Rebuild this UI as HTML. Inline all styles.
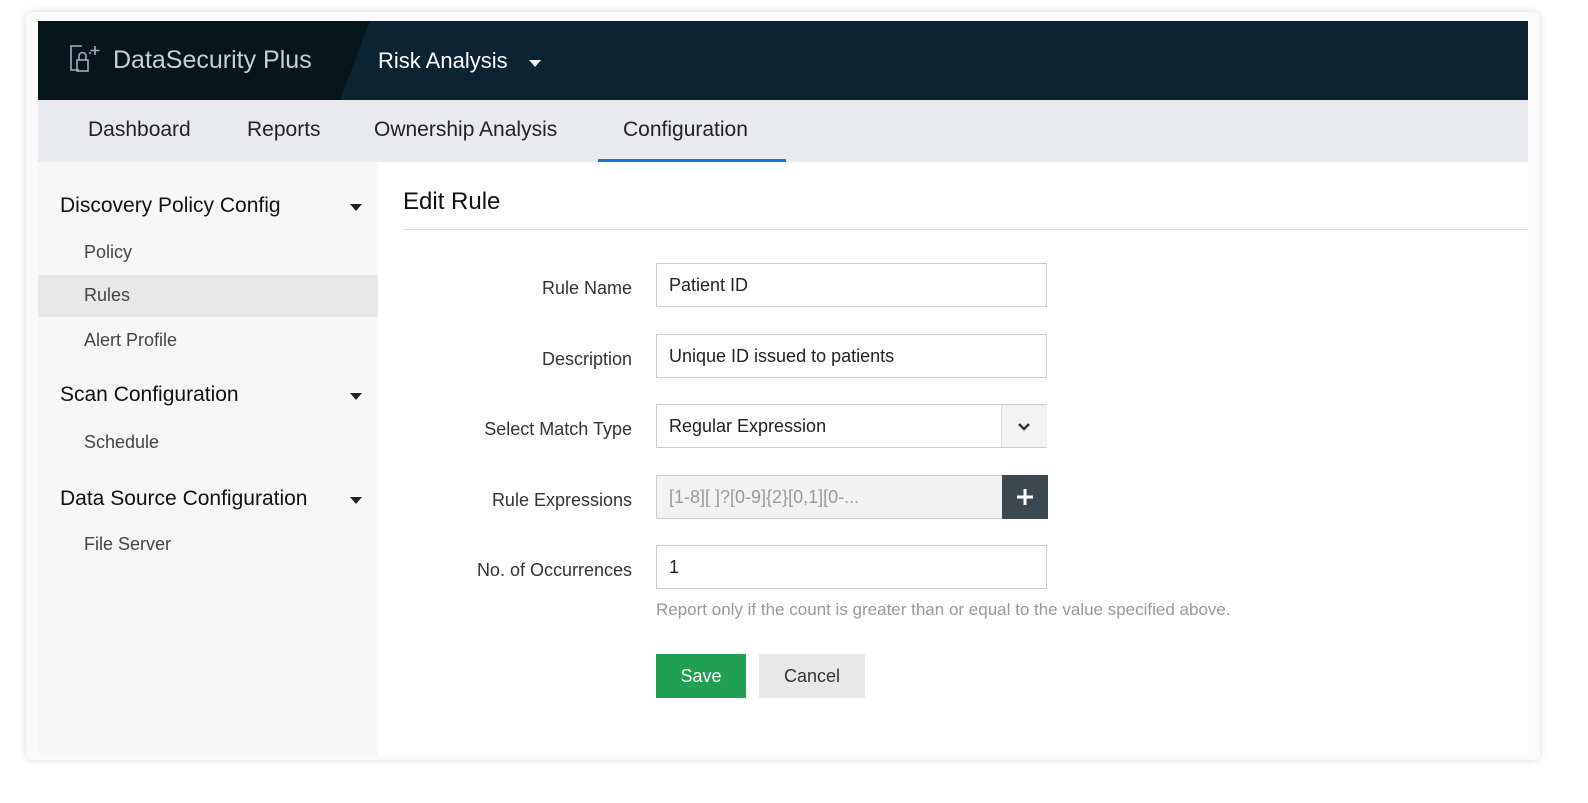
<!DOCTYPE html><html><head><style>
body{margin:0;width:1588px;height:803px;background:#fff;font-family:"Liberation Sans",sans-serif;position:relative;overflow:hidden}
.abs{position:absolute}
.outer{left:26px;top:12px;width:1514px;height:748px;border-radius:6px;box-shadow:0 0 8px rgba(0,0,0,.15);background:#fafafa}
.hdr{left:38px;top:21px;width:1490px;height:79px;background:#0c2431}
.nav{left:38px;top:100px;width:1490px;height:62px;background:#e9eaed}
.nav span{position:absolute;top:18px;font-size:21px;color:#222}
.side{left:38px;top:162px;width:340px;height:593px;background:#f7f7f7}
.main{left:378px;top:162px;width:1150px;height:593px;background:#fff}
.sh{font-size:21px;color:#111;position:absolute;left:22px}
.si{font-size:18px;color:#444;position:absolute;left:46px}
.tri{position:absolute;left:312px;width:0;height:0;border-left:6px solid transparent;border-right:6px solid transparent;border-top:7px solid #222}
.lbl{position:absolute;left:380px;width:252px;font-size:18px;color:#333;text-align:right;white-space:nowrap}
.inp{position:absolute;left:656px;width:391px;height:44px;border:1px solid #ccc;box-sizing:border-box;font-size:18px;color:#222;padding:11px 12px;background:#fff}
</style></head><body>
<div class="abs outer"></div>
<div class="abs hdr"></div>
<svg class="abs" style="left:38px;top:21px" width="340" height="79"><polygon points="0,0 332,0 302,79 0,79" fill="#07151d"/></svg>
<svg class="abs" style="left:68px;top:44px" width="36" height="32" fill="none" stroke="#aab" stroke-width="1.6"><path d="M14 2H3v24h8M22 10v-2"/><rect x="9" y="16" width="11" height="11"/><path d="M11 16v-4a3.5 3.5 0 0 1 7 0v4"/><path d="M27 2v9M22.5 6.5h9"/></svg>
<div class="abs" style="left:113px;top:46px;font-size:25px;color:#c9cfd4">DataSecurity Plus</div>
<div class="abs" style="left:378px;top:48px;font-size:22px;color:#fff">Risk Analysis</div>
<div class="abs" style="left:529px;top:60px;border-left:6px solid transparent;border-right:6px solid transparent;border-top:7px solid #fff"></div>
<div class="abs nav"><span style="left:50px">Dashboard</span><span style="left:209px">Reports</span><span style="left:336px">Ownership Analysis</span><span style="left:585px">Configuration</span><div class="abs" style="left:560px;top:59px;width:188px;height:3px;background:#1a73d9"></div></div>
<div class="abs side">
<div class="sh" style="top:32px">Discovery Policy Config</div><div class="tri" style="top:42px"></div>
<div class="si" style="top:80px">Policy</div>
<div class="abs" style="left:0;top:113px;width:340px;height:42px;background:#e8e8e8"></div>
<div class="si" style="top:123px">Rules</div>
<div class="si" style="top:168px">Alert Profile</div>
<div class="sh" style="top:221px">Scan Configuration</div><div class="tri" style="top:231px"></div>
<div class="si" style="top:270px">Schedule</div>
<div class="sh" style="top:325px">Data Source Configuration</div><div class="tri" style="top:335px"></div>
<div class="si" style="top:372px">File Server</div>
</div>
<div class="abs main"><div class="abs" style="left:25px;top:26px;font-size:24px;color:#111">Edit Rule</div><div class="abs" style="left:25px;top:67px;width:1125px;height:1px;background:#ddd"></div></div>
<div class="lbl" style="top:278px">Rule Name</div>
<div class="inp" style="top:263px">Patient ID</div>
<div class="lbl" style="top:349px">Description</div>
<div class="inp" style="top:334px">Unique ID issued to patients</div>
<div class="lbl" style="top:419px">Select Match Type</div>
<div class="inp" style="top:404px">Regular Expression</div>
<div class="abs" style="left:1001px;top:405px;width:45px;height:42px;background:#f3f3f3;border-left:1px solid #ddd"><svg width="45" height="42"><path d="M17 19l5 5 5-5" stroke="#333" stroke-width="2.5" fill="none"/></svg></div>
<div class="lbl" style="top:490px">Rule Expressions</div>
<div class="inp" style="top:475px;background:#f2f2f2;color:#999">[1-8][ ]?[0-9]{2}[0,1][0-...</div>
<div class="abs" style="left:1002px;top:475px;width:46px;height:44px;background:#3c4850"><svg width="46" height="44"><path d="M23 14v16M15 22h16" stroke="#fff" stroke-width="3"/></svg></div>
<div class="lbl" style="top:560px">No. of Occurrences</div>
<div class="inp" style="top:545px">1</div>
<div class="abs" style="left:656px;top:600px;font-size:17px;color:#999">Report only if the count is greater than or equal to the value specified above.</div>
<div class="abs" style="left:656px;top:654px;width:90px;height:44px;background:#21a054;color:#fff;font-size:18px;text-align:center;line-height:44px">Save</div>
<div class="abs" style="left:759px;top:654px;width:106px;height:44px;background:#e8e8e8;color:#333;font-size:18px;text-align:center;line-height:44px">Cancel</div>
</body></html>
